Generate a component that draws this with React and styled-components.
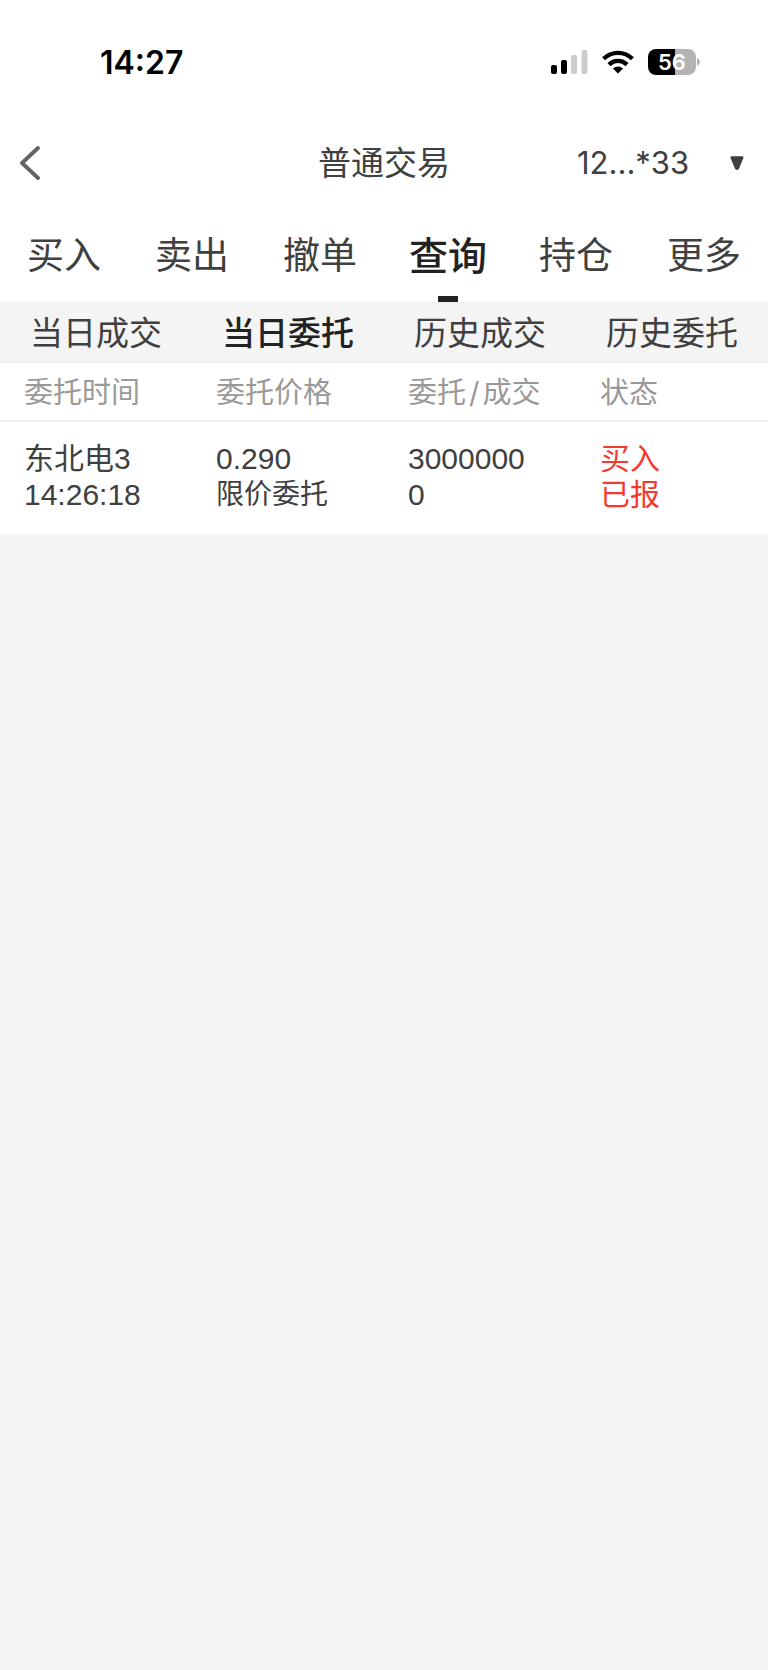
import React, { useState } from "react";
import styled, { createGlobalStyle, css } from "styled-components";

const latin = `Inter, "Noto Sans CJK SC", sans-serif`;
const figures = `"Liberation Sans", "Noto Sans CJK SC", sans-serif`;

const GlobalStyle = createGlobalStyle`
  *, *::before, *::after { box-sizing: border-box; }
  body {
    margin: 0;
    background: #f5f5f5;
    color: #404040;
    font-family: ${latin};
  }
  button, select { font: inherit; color: inherit; }
`;

const resetControl = css`
  margin: 0;
  padding: 0;
  border: 0;
  background: none;
  appearance: none;
  cursor: pointer;
`;

const Page = styled.div`
  width: 100%;
`;

const Top = styled.header`
  background: #fff;
`;

const StatusBar = styled.div`
  display: flex;
  align-items: center;
  justify-content: space-between;
  height: 124px;
  padding: 0 68px 0 100px;
  color: #000;
`;

const Clock = styled.time`
  padding-top: 2px;
  font-size: 32px;
  line-height: 40px;
  font-weight: 600;
`;

const Indicators = styled.div`
  display: flex;
  align-items: center;
  gap: 14px;
`;

const BatteryBox = styled.div`
  display: flex;
  align-items: center;
  gap: 1px;
`;

const BatteryBody = styled.div`
  width: 48px;
  height: 26px;
  border-radius: 8px;
  text-align: center;
  font-size: 22px;
  line-height: 26px;
  font-weight: 600;
  color: #fff;
`;

const NavBar = styled.div`
  display: grid;
  grid-template-columns: 1fr auto 1fr;
  align-items: center;
  height: 78px;
  padding: 0 20px;
`;

const BackButton = styled.button`
  ${resetControl}
  justify-self: start;
  display: flex;
`;

const Title = styled.h1`
  margin: 0;
  font-size: 33px;
  line-height: 44px;
  font-weight: 400;
`;

const Account = styled.label`
  justify-self: end;
  display: flex;
  align-items: center;
  gap: 40px;
  padding-right: 4px;
`;

const AccountSelect = styled.select`
  ${resetControl}
  font-size: 31px;
  line-height: 44px;
`;

const Tabs = styled.nav`
  display: grid;
  grid-template-columns: repeat(6, 1fr);
  height: 100px;
`;

const Tab = styled.button`
  ${resetControl}
  position: relative;
  padding-top: 2px;
  font-size: ${(p) => (p.$active ? 39 : 37)}px;
  font-weight: ${(p) => (p.$active ? 500 : 400)};
  color: ${(p) => (p.$active ? "#222" : "#404040")};

  &::after {
    content: "";
    display: ${(p) => (p.$active ? "block" : "none")};
    position: absolute;
    bottom: 0;
    left: calc(50% - 10px);
    width: 20px;
    height: 6px;
    background: #222;
  }
`;

const SubTabs = styled.nav`
  display: grid;
  grid-template-columns: repeat(4, 1fr);
  height: 61px;
  background: #f4f4f4;
  border-top: 1px solid #eee;
  border-bottom: 2px solid #eee;
`;

const SubTab = styled.button`
  ${resetControl}
  padding-bottom: 2px;
  font-size: 33px;
  font-weight: ${(p) => (p.$active ? 500 : 400)};
  color: ${(p) => (p.$active ? "#222" : "#404040")};
`;

const Orders = styled.table`
  width: 100%;
  table-layout: fixed;
  border-collapse: separate;
  border-spacing: 0;
  background: #fff;
`;

const HeadCell = styled.th`
  height: 59px;
  padding: 2px 0 0 24px;
  border-bottom: 2px solid #eee;
  text-align: left;
  font-size: 29px;
  line-height: 36px;
  font-weight: 400;
  color: #999;
`;

const Slash = styled.span`
  padding: 0 3px;
`;

const Cell = styled.td`
  height: 112px;
  padding: 0 0 2px 24px;
  font-family: ${figures};
  line-height: 36px;
  color: ${(p) => (p.$buy ? "#f43a30" : "#404040")};
`;

const Line = styled.div`
  font-size: ${(p) => (p.$small ? 28 : 30)}px;
  height: 36px;
`;

const SignalIcon = () => (
  <svg width="37" height="24" viewBox="0 0 37 24" aria-label="信号">
    <rect x="0" y="15" width="6" height="9" rx="2" fill="#000" />
    <rect x="10" y="10" width="6" height="14" rx="2" fill="#000" />
    <rect x="20" y="5" width="6" height="19" rx="2" fill="#ccc" />
    <rect x="30.500" y="0" width="6" height="24" rx="2" fill="#ccc" />
  </svg>
);

const WifiIcon = () => (
  <svg width="32" height="24" viewBox="0 0 32 24" aria-label="无线网络">
    <g fill="none" stroke="#000" strokeWidth="4.400">
      <path d="M1.600 8.800 A20.500 20.500 0 0 1 30.400 8.800" />
      <path d="M7 14.600 A12.800 12.800 0 0 1 25 14.600" />
    </g>
    <path d="M16 23.600 L10.900 18.500 A7.400 7.400 0 0 1 21.100 18.500 Z" fill="#000" />
  </svg>
);

const Battery = ({ level }) => (
  <BatteryBox>
    <BatteryBody
      style={{ background: `linear-gradient(to right, #000 ${level}%, #b3b3b3 ${level}%)` }}
    >
      {level}
    </BatteryBody>
    <svg width="3" height="8" viewBox="0 0 3 8" aria-hidden="true">
      <path d="M0 0 Q3 1.500 3 4 Q3 6.500 0 8 Z" fill="#b3b3b3" />
    </svg>
  </BatteryBox>
);

const BackIcon = () => (
  <svg width="20" height="34" viewBox="0 0 20 34" aria-hidden="true">
    <path
      d="M18 2 L2 17 L18 32"
      fill="none"
      stroke="#626262"
      strokeWidth="3.800"
      strokeLinecap="round"
      strokeLinejoin="round"
    />
  </svg>
);

const DownIcon = () => (
  <svg width="14" height="14" viewBox="0 0 14 14" aria-hidden="true">
    <path
      d="M1.800 1.500 H12.200 L7.800 12.200 Q7 13 6.200 12.200 Z"
      fill="#404040"
      stroke="#404040"
      strokeWidth="2.600"
      strokeLinejoin="round"
    />
  </svg>
);

const tabs = ["买入", "卖出", "撤单", "查询", "持仓", "更多"];
const subTabs = ["当日成交", "当日委托", "历史成交", "历史委托"];
const orders = [
  {
    name: "东北电3",
    time: "14:26:18",
    price: "0.290",
    kind: "限价委托",
    amount: "3000000",
    filled: "0",
    side: "买入",
    state: "已报",
  },
];

export default function App() {
  const [tab, setTab] = useState("查询");
  const [subTab, setSubTab] = useState("当日委托");

  return (
    <Page>
      <GlobalStyle />
      <Top>
        <StatusBar>
          <Clock>14:27</Clock>
          <Indicators>
            <SignalIcon />
            <WifiIcon />
            <Battery level={56} />
          </Indicators>
        </StatusBar>
        <NavBar>
          <BackButton aria-label="返回">
            <BackIcon />
          </BackButton>
          <Title>普通交易</Title>
          <Account>
            <AccountSelect aria-label="账户">
              <option>12...*33</option>
            </AccountSelect>
            <DownIcon />
          </Account>
        </NavBar>
        <Tabs>
          {tabs.map((t) => (
            <Tab key={t} $active={t === tab} onClick={() => setTab(t)}>
              {t}
            </Tab>
          ))}
        </Tabs>
        <SubTabs>
          {subTabs.map((t) => (
            <SubTab key={t} $active={t === subTab} onClick={() => setSubTab(t)}>
              {t}
            </SubTab>
          ))}
        </SubTabs>
      </Top>
      <Orders>
        <thead>
          <tr>
            <HeadCell scope="col">委托时间</HeadCell>
            <HeadCell scope="col">委托价格</HeadCell>
            <HeadCell scope="col">
              委托<Slash>/</Slash>成交
            </HeadCell>
            <HeadCell scope="col">状态</HeadCell>
          </tr>
        </thead>
        <tbody>
          {orders.map((o) => (
            <tr key={o.time}>
              <Cell>
                <Line>{o.name}</Line>
                <Line>{o.time}</Line>
              </Cell>
              <Cell>
                <Line>{o.price}</Line>
                <Line $small>{o.kind}</Line>
              </Cell>
              <Cell>
                <Line>{o.amount}</Line>
                <Line>{o.filled}</Line>
              </Cell>
              <Cell $buy>
                <Line>{o.side}</Line>
                <Line>{o.state}</Line>
              </Cell>
            </tr>
          ))}
        </tbody>
      </Orders>
    </Page>
  );
}
